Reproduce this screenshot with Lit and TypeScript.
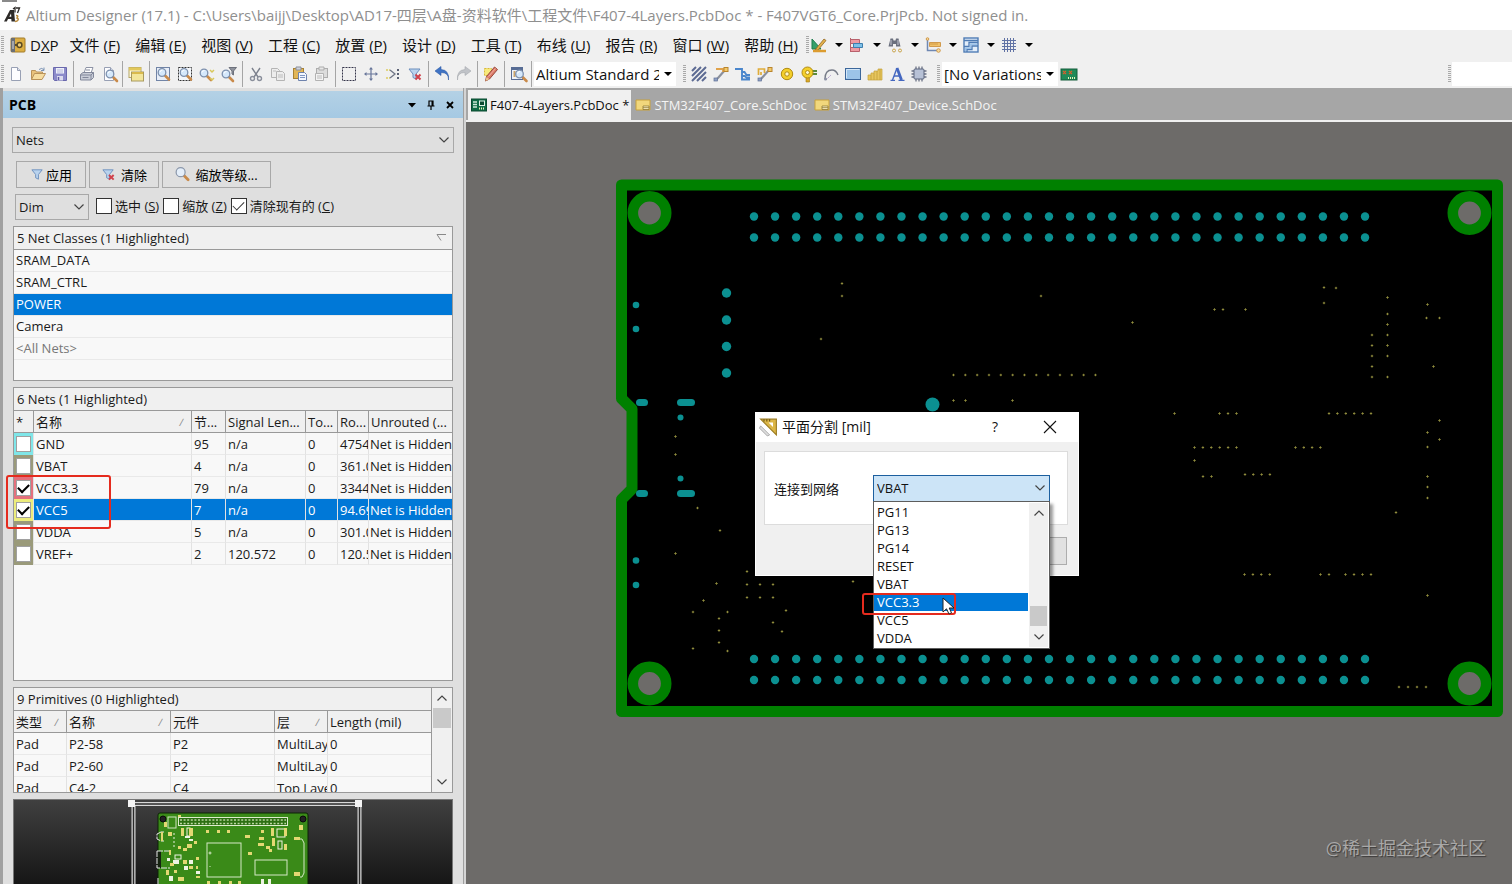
import { LitElement, html, svg, css, nothing } from "lit";
import { customElement } from "lit/decorators.js";
import { classMap } from "lit/directives/class-map.js";

/* ---------- shared icon fragments ---------- */
const lens = (x: number, y: number) => svg`
  <path d="M${x + 3} ${y + 3}l4 4" stroke="#c98a4a" stroke-width="2.6" stroke-linecap="round"/>
  <circle cx=${x} cy=${y} r="3.8" fill="#d5e8fb" stroke="#7d90ad" stroke-width="1.3"/>
  <path d="M${x - 2} ${y - 0.5}q.5-2 2.5-2" stroke="#fff" fill="none"/>`;
const funnel = svg`<path d="M2 3h11l-4 5v5l-3-1.500V8z" fill="#b9d3ee" stroke="#6d8fbd"/>`;
const redX = svg`<path d="M8.500 8.500l5 5m0-5l-5 5" stroke="#d0424c" stroke-width="2"/>`;
const sheet = svg`<path d="M3.500 1.500h6l3 3v10h-9z" fill="#fdfdff" stroke="#98a0b4"/><path d="M9.500 1.500v3h3" fill="#dfe4ef" stroke="#98a0b4"/>`;

const icons: Record<string, unknown> = {
  doc: sheet,
  open: svg`<path d="M1.500 13.500v-9h4l1 1.500h6v2" fill="#e9c27c" stroke="#b9925a"/><path d="M1.500 13.500l3-6h11l-3.500 6z" fill="#f6dca0" stroke="#b9925a"/><path d="M9 3.500q3-2.500 5 .5m0-2.500v3h-3" fill="none" stroke="#7b93b5"/>`,
  save: svg`<path d="M1.500 1.500h13v13h-12l-1-1z" fill="#8c8bca" stroke="#6a68ad"/><path d="M4 2h8v5.500H4z" fill="#eef0fa"/><path d="M5 4h6M5 6h6" stroke="#b4b6d8"/><path d="M5 10h6v4.500H5z" fill="#dcdcee"/><path d="M6.500 11v3" stroke="#5c5aa3" stroke-width="1.500"/>`,
  print: svg`<path d="M5 7l2-5.500h7L12 7" fill="#fff" stroke="#8d93a5"/><path d="M1.500 8.500l2.500-2h10.500v5l-2.500 2.500H1.500z" fill="#c9cdd8" stroke="#82889b"/><path d="M1.500 9h10.500v5M12 9l2.500-2.500M7 4h4M3.500 11.500h6" stroke="#82889b" fill="none"/>`,
  preview: svg`${sheet}${lens(9, 8)}`,
  window: svg`<rect x="1" y="1.500" width="12" height="10" fill="#fffbe0" stroke="#b5a564"/><path d="M1 3h12" stroke="#e2c85a" stroke-width="3"/><rect x="3.500" y="6" width="12" height="9" fill="#f3e69a" stroke="#a89a5e"/><path d="M4 7h11" stroke="#d9ba4c" stroke-width="2"/>`,
  zoomDoc: svg`<rect x="1.500" y="1.500" width="13" height="13" fill="#e8eef8" stroke="#7184a6"/>${lens(7, 6.5)}`,
  zoomArea: svg`<rect x="1.500" y="1.500" width="13" height="13" fill="#f4f7fb" stroke="#333" stroke-dasharray="2 1"/>${lens(7, 6.5)}`,
  zoomSel: svg`${lens(5, 7)}<path d="M11 4l2 2 2-2M11 12l2 2 2-2" stroke="#d8c75a" fill="none" stroke-width="1.500"/>`,
  zoomFilter: svg`${lens(5, 8)}<path d="M8 1.500h7.500l-3 3.500v4l-1.500-1V5z" fill="#8e929c" stroke="#6d717c"/>`,
  cut: svg`<path d="M4 2l6 9M12 2L6 11" stroke="#7c818d" stroke-width="1.400"/><circle cx="4.500" cy="12.500" r="2" fill="none" stroke="#8a8f9b" stroke-width="1.400"/><circle cx="11.500" cy="12.500" r="2" fill="none" stroke="#8a8f9b" stroke-width="1.400"/>`,
  copy: svg`<g fill="#ededed" stroke="#b4b4b4"><path d="M1.500 2.500h6l2 2v7h-8z"/><path d="M6.500 5.500h6l2 2v7h-8z"/></g><path d="M8 9h5M8 11h5M3 5h3" stroke="#bdbdbd"/>`,
  paste: svg`<rect x="1.500" y="2.500" width="10" height="10" fill="#e2b656" stroke="#a88234"/><path d="M4 1h5v3H4z" fill="#cfd3dc" stroke="#8b8f99"/><path d="M6.500 6.500h6l2 2v6h-8z" fill="#f3f7ff" stroke="#6e83ad"/><path d="M8 9.500h5M8 11.500h5" stroke="#7f96c2"/>`,
  pasteSp: svg`<rect x="2.500" y="2.500" width="11" height="9" fill="#dcdcdc" stroke="#adadad"/><path d="M5 1h5v3H5z" fill="#e7e7e7" stroke="#adadad"/><path d="M1.500 7.500h8v7h-8z" fill="#f3f3f3" stroke="#b2b2b2"/><path d="M3 10h5M3 12h5" stroke="#bbb"/>`,
  select: svg`<rect x="1.500" y="1.500" width="13" height="13" fill="none" stroke="#35354a" stroke-dasharray="2 1"/>`,
  move: svg`<path d="M8 2v12M2 8h12" stroke="#68769a" stroke-width="1.200"/><path d="M8 1l2 2.500H6zM8 15l-2-2.500h4zM1 8l2.500-2v4zM15 8l-2.500-2v4z" fill="#68769a"/>`,
  deselect: svg`<path d="M1 4h4M1 12h4" stroke="#dccb60" stroke-width="1.500" stroke-dasharray="2 1"/><path d="M5 4l5 4-5 4" fill="none" stroke="#707686" stroke-width="1.300"/><path d="M12 3h2v2h-2zM12 7h2v2h-2zM12 11h2v2h-2z" fill="#5a6174"/>`,
  clearFilter: svg`${funnel}${redX}`,
  funnel,
  lens: svg`<g transform="translate(0 -.5)"><path d="M9 9l5 5" stroke="#c98a4a" stroke-width="3" stroke-linecap="round"/><circle cx="6" cy="6" r="4.800" fill="#e4eef9" stroke="#8b97ab" stroke-width="1.300"/></g>`,
  undo: svg`<path d="M14.500 14Q15 6.500 7 6.500V9.500L1 5l6-4.500v3Q15.500 4 14.500 14z" fill="#3f73c4" stroke="#2f5da8" stroke-width=".6"/>`,
  redo: svg`<path d="M1.500 14Q1 6.500 9 6.500V9.500L15 5 9 .500v3Q.5 4 1.500 14z" fill="#c0c3c8" stroke="#a6a9ae" stroke-width=".6"/>`,
  pencil: svg`<path d="M1.500 2.500h7v7h-7z" fill="#f8ea7a" stroke="#d8b93a" stroke-dasharray="2 1"/><path d="M2.500 15l1-4.500L11.500 1l3 2.500L6.500 13z" fill="#dc7a68" stroke="#96483a"/><path d="M2.500 15l1-4 3 2.300z" fill="#eec28c"/><path d="M5.500 10.500l7-8" stroke="#f0b0a4"/>`,
  browse: svg`<rect x="1.500" y="1.500" width="11" height="12" fill="#eef3fa" stroke="#576c94"/><path d="M2 3h10" stroke="#576c94" stroke-width="2"/><path d="M3.500 6h2M3.500 8h2M3.500 10h2" stroke="#c08a3b" stroke-width="1.300"/>${lens(9.5, 8)}`,
  hatch: svg`<path d="M1 5l4-4M1 10l9-9M1 15L15 1M6 15l9-9M11 15l4-4" stroke="#5d6b93" stroke-width="2"/>`,
  route: svg`<path d="M2.500 14L5 12l7-8" stroke="#8b909c" stroke-width="2.200" fill="none"/><path d="M3 3h7v3" stroke="#e0a24a" stroke-width="1.800" fill="none"/><rect x="11" y="1.500" width="4" height="4" fill="#f2c96a" stroke="#b9842c"/><rect x="1" y="12" width="3.500" height="3" fill="#8fa0c4" stroke="#5f7096" stroke-width=".7"/>`,
  multi: svg`<path d="M0 3h7v10.500h8M7 6h2.500l2 3H15M7 10h2.500l2 1.500H15" stroke="#4a86cc" stroke-width="1.900" fill="none"/>`,
  diff: svg`<path d="M3 14L12 4" stroke="#8b909c" stroke-width="2.200"/><path d="M1.500 9V3h6v4M4 9V6" stroke="#dfac3a" stroke-width="1.700" fill="none"/><rect x="11" y="1.500" width="4" height="4" fill="#f2c96a" stroke="#b9842c"/><rect x="1" y="12" width="3.500" height="3" fill="#8fa0c4" stroke="#5f7096" stroke-width=".7"/>`,
  pad: svg`<circle cx="8" cy="8" r="5.700" fill="#f4cf2a" stroke="#b08b12"/><circle cx="8" cy="8" r="2.200" fill="#fff7cf" stroke="#b08b12"/>`,
  via: svg`<path d="M5 10h3.500v6H5z" fill="#dba927" stroke="#a37d16" stroke-width=".6"/><path d="M11 5h5M11 8h5" stroke="#5b8a3b" stroke-width="1.800"/><circle cx="6.500" cy="6.500" r="5.500" fill="#f4cf2a" stroke="#b08b12"/><circle cx="6.500" cy="6.500" r="2" fill="#fff7cf" stroke="#b08b12"/>`,
  arc: svg`<path d="M2 13Q2 4 9 4q4 0 6 5" stroke="#777c88" stroke-width="1.400" fill="none"/><path d="M3 14l5-5" stroke="#b09bc9" stroke-dasharray="2 1"/><circle cx="2.500" cy="13" r="1.500" fill="#8b90a3"/>`,
  fill: svg`<rect x=".5" y="2.500" width="15" height="11" fill="#9cc4e8" stroke="#3c679b"/><path d="M1.500 12V3.500h13" stroke="#d4e7f8" fill="none"/>`,
  poly: svg`<path d="M1 14V9h3V7h3V5h4V3h4v11z" fill="#e7c65d" stroke="#c4a03b" stroke-width=".7"/><path d="M4 9v5M7 7v7M10 5v9M13 3v11" stroke="#c4a03b" stroke-width=".8"/>`,
  textA: svg`<path d="M8 2L3.500 14" stroke="#4467c0" stroke-width="1.400" fill="none"/><path d="M8 2l4.500 12" stroke="#4467c0" stroke-width="2.800" fill="none"/><path d="M5 10h6M1.500 14.300h4.500M9.500 14.300h6" stroke="#4467c0" stroke-width="1.300"/>`,
  chip: svg`<path d="M5 .5v15M8 .5v15M11 .5v15M.5 5h15M.5 8h15M.5 11h15" stroke="#6b7286" stroke-width="1.300"/><rect x="3" y="3" width="10" height="10" rx="1" fill="#b7c1d6" stroke="#5d667e"/>`,
  board: svg`<rect x="0" y="3" width="16" height="11" fill="#1f8a58" stroke="#155c3b"/><path d="M2 5l3 3M5 5L2 8M8 5l3 3M11 5L8 8" stroke="#d3602e" stroke-width="1.300"/><path d="M7 12h8" stroke="#e5f3b7" stroke-width="2" stroke-dasharray="1 1"/>`,
  ruler: svg`<path d="M1 2v10h9z" fill="#35a06b" stroke="#1c7c4d"/><path d="M4 13l9-11 2 1.500L7 13z" fill="#e3b14c" stroke="#93671e" stroke-width=".8"/><path d="M2 14h13" stroke="#dc9c30" stroke-width="2.500"/>`,
  align: svg`<path d="M1.500 2.500h9v4h-9zM1.500 10.500h9v4h-9z" fill="#ef9aa2" stroke="#b8616c"/><path d="M4.500 6.500h9v4h-9z" fill="#7ec0e8" stroke="#3e7fae"/><path d="M1.500 1v14" stroke="#b8616c"/>`,
  binocs: svg`<path d="M1.500 9.500l2-8H6l.5 2h2l.5-2h2.500l2 8H9V7H6v2.500z" fill="#6a6f7d"/><path d="M4 3v5M11 3v5" stroke="#c4c8d3"/><circle cx="7" cy="13.500" r="1.500" fill="none" stroke="#c9a34a"/><circle cx="13" cy="13.500" r="1.500" fill="none" stroke="#c9a34a"/>`,
  dims: svg`<path d="M2.500 2v11.500H14" stroke="#6f88b2" stroke-width="1.500" fill="none"/><path d="M4.500 5.500h11v4h-11z" fill="#f0c26a" stroke="#c98a34" stroke-width=".8"/><path d="M6 6v2M8 6v2M10 6v2M12 6v2" stroke="#c98a34" stroke-width=".7"/><circle cx="2.500" cy="2" r="1.300" fill="#f6dca0" stroke="#c98a34" stroke-width=".8"/><circle cx="13.500" cy="13.500" r="1.800" fill="#f6dca0" stroke="#c98a34" stroke-width=".8"/>`,
  rooms: svg`<rect x="1" y="1" width="14" height="14" fill="#e3eefa" stroke="#4f7cb5" stroke-width="1.400"/><path d="M1 9.500h5v-4h9M4 15v-2.500h5V9h6M1 3.500h14" stroke="#4f7cb5" stroke-width="1.300" fill="none"/><path d="M2 10.500h5v-4h7V8H8v4H3v2H2z" fill="#9cc3ea"/>`,
  grid: svg`<path d="M3.500 1v14M6.500 1v14M9.500 1v14M12.500 1v14M1 3.500h14M1 6.500h14M1 9.500h14M1 12.500h14" stroke="#6173a5"/>`,
  dxp: svg`<rect x="1" y="1" width="14" height="14" rx="1" fill="#dcae42" stroke="#a37d2a"/><path d="M1 1h4v14H1z" fill="#6b6f76"/><path d="M3 4v8" stroke="#ddd"/><circle cx="9.500" cy="8" r="2.400" fill="#f0cf7a" stroke="#5a4a23" stroke-width="1.500"/><path d="M5 8h2.500" stroke="#5a4a23" stroke-width="2"/>`,
  logo: svg`<path d="M0 14.500L6 3h4l1 11.500H7.500l-.2-2.500H4l-1.200 2.500z" fill="#2d2a28"/><path d="M5.300 9.700h2L7 6.500z" fill="#fff"/><path d="M9 2l2-1.500v5M12 1h3.500l-2 5" stroke="#2d2a28" stroke-width="1.300" fill="none"/><path d="M12 8.500q3 0 1 2.500 2.500 1 0 3l-2 .5" stroke="#b98b3d" stroke-width="1.500" fill="none"/>`,
  pcbTab: svg`<rect x=".5" y="2" width="15" height="12" fill="#0f6b45" stroke="#0a4a30"/><path d="M2 5h4M2 7.500h4M2 10h4" stroke="#cfe9d8" stroke-width="1.300"/><rect x="8.500" y="4" width="5" height="4.500" fill="#0a4a30" stroke="#dff0e6"/><path d="M8 11.500h6" stroke="#e8f3b5" stroke-width="2" stroke-dasharray="1 1"/>`,
  schTab: svg`<path d="M1 3h14v10H1z" fill="#f1d77c" stroke="#c7a13c"/><path d="M8 9h6v3.500H8z" fill="#fdf3c6" stroke="#8e762f" stroke-width=".8"/><path d="M8 10.700h6" stroke="#8e762f" stroke-width=".8"/>`,
  square: svg`<path d="M1 1h14v14z" fill="#dcb646" stroke="#9b7c22"/><path d="M8 4h4v4z" fill="#fff"/><path d="M4 1v2M6.500 1v2M9 1v2" stroke="#6b5515"/><path d="M1 7l8 8-2 1-7-7z" fill="#dedede" stroke="#9a9a9a" stroke-width=".7"/>`,
};
const icon = (name: string) =>
  html`<svg class="ico" viewBox="0 0 16 16" aria-hidden="true">${icons[name]}</svg>`;
const chevron = (cls = "") =>
  html`<svg class="chev ${cls}" viewBox="0 0 10 6" aria-hidden="true"><path d="M.5 .5L5 5 9.500 .5" fill="none" stroke="currentColor" stroke-width="1.200"/></svg>`;
const arrow = html`<svg class="arrow" viewBox="0 0 8 4" aria-hidden="true"><path d="M0 0h8L4 4z" fill="#000"/></svg>`;

const base = css`
  :host, * { box-sizing: border-box; }
  button, select, input { font: inherit; color: inherit; margin: 0; }
  select { appearance: none; border-radius: 0; outline: none; }
  .ico { width: 16px; height: 16px; display: block; flex: none; overflow: visible; }
  .chev { width: 10px; height: 6px; display: block; flex: none; color: #444; }
  .up { transform: rotate(180deg); }
  .arrow { width: 8px; height: 4px; flex: none; }
  .combo { display: grid; align-items: center; }
  .combo > select { grid-area: 1 / 1; width: 100%; height: 100%; min-width: 0; }
  .combo > svg { grid-area: 1 / 1; justify-self: end; pointer-events: none; }
`;

/* ---------- title, menu and tool bars ---------- */
@customElement("app-bars")
class AppBars extends LitElement {
  static styles = [base, css`
    :host { display: block; background: #f0f0f0; font-size: 15px; color: #111; }
    .title { display: flex; align-items: center; gap: 6px; height: 30px; padding: 3px 4px; background: #fff; color: #8f8f8f; white-space: nowrap; overflow: hidden; line-height: 24px; }
    .row { display: flex; align-items: center; height: 29px; }
    .grip { width: 3px; height: 18px; margin: 0 1px; flex: none; background: repeating-linear-gradient(#a9a9a9 0 1px, transparent 1px 2px); }
    .wide { margin: 0 2px 0 7px; }
    .menus { display: flex; align-items: center; gap: 15px; padding-left: 5px; }
    .menu { display: flex; align-items: center; border: 0; background: none; padding: 0; white-space: nowrap; line-height: 20px; }
    .menu .ico { margin-right: 4px; }
    .menus .menu:first-child { margin-right: -4px; }
    .menus + .grip { margin-left: 8px; }
    .drops { display: flex; }
    .drop { width: 38px; height: 22px; display: flex; align-items: center; justify-content: space-between; border: 0; background: none; padding: 0 6px 0 0; }
    .tool { width: 22px; height: 24px; padding: 0; border: 0; background: none; display: grid; place-items: center; flex: none; }
    .sep { width: 1px; height: 26px; margin: 0 2px; background: #a5a5a5; flex: none; }
    .combo { height: 24px; background: #fff; flex: none; }
    .combo select { border: 0; background: none; padding: 0 17px 0 2px; white-space: nowrap; }
    .std { width: 142px; }
    .var { width: 116px; }
    .combo .arrow { margin-right: 4px; }
    .spring { flex: 1; }
    .field { width: 60px; height: 24px; border: 0; background: #fff; padding: 0 4px; }
  `];
  private menus = [["文件", "F"], ["编辑", "E"], ["视图", "V"], ["工程", "C"], ["放置", "P"], ["设计", "D"], ["工具", "T"], ["布线", "U"], ["报告", "R"], ["窗口", "W"], ["帮助", "H"]];
  private drops = ["ruler", "align", "binocs", "dims", "rooms", "grid"];
  private main = [["doc", "open", "save"], ["print", "preview"], ["window"], ["zoomDoc", "zoomArea", "zoomSel", "zoomFilter"], ["cut", "copy", "paste", "pasteSp"], ["select", "move", "deselect", "clearFilter"], ["undo", "redo"], ["pencil"], ["browse"]];
  private place = ["hatch", "route", "multi", "diff", "pad", "via", "arc", "fill", "poly", "textA", "chip"];
  private tool(n: string) {
    return html`<button class="tool" aria-label=${n}>${icon(n)}</button>`;
  }
  render() {
    return html`
      <header class="title">${icon("logo")}<span>Altium Designer (17.1) - C:\\Users\\baijj\\Desktop\\AD17-四层\\A盘-资料软件\\工程文件\\F407-4Layers.PcbDoc * - F407VGT6_Core.PrjPcb. Not signed in.</span></header>
      <div class="row">
        <span class="grip"></span>
        <nav class="menus">
          <button class="menu">${icon("dxp")}D<u>X</u>P</button>
          ${this.menus.map(([t, k]) => html`<button class="menu">${t}&nbsp;(<u>${k}</u>)</button>`)}
        </nav>
        <span class="grip wide"></span>
        <div class="drops">${this.drops.map((d) => html`<button class="drop" aria-label=${d}>${icon(d)}${arrow}</button>`)}</div>
      </div>
      <div class="row">
        <span class="grip"></span>
        ${this.main.map((g) => html`${g.map((n) => this.tool(n))}<span class="sep"></span>`)}
        <div class="combo std"><select aria-label="View configuration"><option>Altium Standard 2D</option></select>${arrow}</div>
        <span class="grip wide"></span>
        ${this.place.map((n) => this.tool(n))}
        <span class="grip wide"></span>
        <div class="combo var"><select aria-label="Variations"><option>[No Variations]</option></select>${arrow}</div>
        ${this.tool("board")}
        <span class="spring"></span>
        <span class="grip"></span>
        <input class="field" aria-label="Address">
      </div>`;
  }
}

/* ---------- thumbnail of the board ---------- */
const thumbParts: [number, number, number, number, string][] = [
  [22, 15, 3, 2, "y"], [8, 22, 3, 5, "y"], [25, 28, 3, 8, "y"], [33, 28, 4, 8, "y"], [29, 36, 5, 2, "w"],
  [12, 32, 4, 4, "y"], [22, 46, 3, 3, "y"], [27, 48, 4, 3, "y"], [33, 39, 4, 2, "w"], [31, 44, 5, 4, "y"],
  [38, 41, 3, 3, "y"], [50, 30, 3, 3, "y"], [61, 30, 3, 3, "y"], [71, 30, 3, 3, "y"], [89, 35, 5, 3, "y"],
  [92, 52, 4, 3, "y"], [103, 37, 5, 3, "y"], [105, 30, 3, 3, "y"], [102, 43, 6, 3, "y"], [116, 38, 3, 8, "y"],
  [115, 28, 3, 8, "y"], [128, 28, 3, 8, "y"], [128, 44, 3, 6, "y"], [143, 25, 4, 5, "y"], [138, 37, 6, 3, "y"],
  [138, 72, 6, 4, "y"], [110, 46, 4, 3, "y"], [113, 49, 3, 3, "y"], [5, 32, 2, 9, "y"], [13, 50, 2, 5, "y"],
  [17, 60, 6, 4, "w"], [14, 63, 4, 3, "y"], [27, 60, 4, 4, "y"], [33, 60, 4, 4, "w"], [28, 66, 4, 4, "w"],
  [33, 66, 4, 3, "y"], [40, 66, 2, 3, "y"], [40, 71, 4, 3, "w"], [40, 76, 4, 2, "y"], [22, 77, 6, 4, "y"],
  [13, 76, 4, 5, "w"], [40, 57, 3, 3, "y"], [18, 70, 3, 3, "y"], [10, 70, 3, 5, "y"], [11, 58, 3, 3, "w"],
  [51, 81, 3, 3, "y"], [62, 81, 3, 3, "y"], [73, 81, 3, 3, "y"], [82, 81, 3, 3, "y"], [105, 79, 3, 5, "w"], [112, 79, 3, 5, "w"],
];

/* ---------- PCB side panel ---------- */
type NetRow = { c: string; on?: boolean; sel?: boolean; v: string[] };
@customElement("pcb-panel")
class PcbPanel extends LitElement {
  static styles = [base, css`
    :host { display: flex; flex-direction: column; background: #dfdfdf; border-left: 3px solid #a0a0a0; border-right: 1px solid #a0a0a0; font-size: 13px; color: #1a1a1a; min-height: 0; overflow: hidden; }
    .head { display: flex; align-items: center; height: 27px; flex: none; margin-top: 3px; padding: 0 4px 0 6px; background: linear-gradient(#b4d1e5, #a5c9e3); color: #000; }
    .head h2 { flex: 1; margin: 0; font-size: 14px; line-height: 20px; }
    .hb { width: 19px; height: 20px; padding: 0; border: 0; background: none; display: grid; place-items: center; }
    .hb svg { width: 10px; height: 10px; }
    .body { display: flex; flex-direction: column; flex: 1; min-height: 0; padding: 9px 9px 0 9px; }
    .body .combo select { border: 1px solid #a8a8a8; background: #dfdfdf; padding: 0 20px 0 3px; }
    .nets { height: 26px; flex: none; }
    .combo .chev { margin-right: 5px; }
    .btns { display: flex; gap: 3px; height: 27px; margin: 8px 0 6px 4px; flex: none; }
    .btn { display: flex; align-items: center; justify-content: center; gap: 5px; width: 70px; border: 1px solid #a8a8a8; background: #dfdfdf; padding: 0; white-space: nowrap; color: #000; }
    .btn:first-child { gap: 1px; }
    .btn .ico { width: 15px; height: 15px; }
    .zoom { width: 109px; }
    .opts { display: flex; align-items: center; height: 26px; margin: 0 0 6px 3px; flex: none; white-space: nowrap; }
    .dim { width: 74px; height: 26px; margin-right: 7px; }
    .opt { display: flex; align-items: center; gap: 3px; margin-right: 4px; height: 26px; line-height: 20px; padding-bottom: 3px; }
    input[type="checkbox"] { appearance: none; width: 16px; height: 16px; border: 1px solid #333; background: #fff; display: grid; place-items: center; flex: none; }
    input[type="checkbox"]:checked::after { content: ""; width: 10px; height: 5px; border: solid #333; border-width: 0 0 1px 1px; transform: rotate(-45deg) translate(1px, -1px); }
    .list { border: 1px solid #999; background: #f8f8f8; flex: none; overflow: hidden; margin: 0 1px 6px; line-height: 20px; }
    .classes { height: 155px; }
    .netlist { height: 294px; }
    .prims { height: 106px; display: flex; }
    .cap { display: flex; align-items: center; justify-content: space-between; height: 23px; padding: 0 6px 0 3px; background: #f0f0f0; border-bottom: 1px solid #999; }
    .cap svg { width: 10px; height: 8px; }
    ul { list-style: none; margin: 0; padding: 0; }
    li { height: 22px; padding: 0 2px; border-bottom: 1px solid #e9e9e9; }
    .dimmed { color: #777; }
    .sel, tr.sel td { background: #0078d7; color: #fff; }
    table { border-collapse: separate; border-spacing: 0; table-layout: fixed; width: 100%; }
    th { height: 22px; padding: 0 0 0 2px; text-align: left; font-weight: 400; background: #f0f0f0; border-bottom: 1px solid #999; border-left: 1px solid #999; white-space: nowrap; overflow: hidden; }
    th:first-child, td:first-child { border-left: 0; padding-left: 2px; }
    td { height: 22px; padding: 0 0 0 2px; white-space: nowrap; overflow: hidden; border-bottom: 1px solid #e9e9e9; border-left: 1px solid #e2e2e2; }
    .netlist td:last-child { padding-left: 1px; }
    .th { display: flex; justify-content: space-between; align-items: center; padding-right: 8px; }
    .th i { color: #888; font-size: 10px; }
    .netlist td:first-child { padding: 0; border: 0; }
    .chk { display: grid; width: 19px; height: 22px; place-items: center; }
    .netlist .chk input { width: 15px; height: 16px; border: 1px solid #a0a0a0; }
    .netlist .chk input:checked::after { border-color: #000; border-width: 0 0 2px 2px; width: 9px; height: 5px; transform: rotate(-45deg) translate(1px, -1px); }
    .cyan { background: #7fe6e9; } .olive { background: #9a9a7a; } .rose { background: #e4707c; } .lemon { background: #ecec7c; }
    .grow { flex: 1; min-width: 0; border-right: 1px solid #999; }
    .bar { width: 20px; display: flex; flex-direction: column; align-items: center; background: #f0f0f0; padding: 7px 0; }
    .bar .thumb { width: 18px; height: 20px; background: #c9c9c9; margin: 7px 0 auto; }
    .thumbwrap { flex: 1; min-height: 80px; margin: 0 1px; border: 1px solid #777; border-bottom: 0; background: linear-gradient(#404040, #161616); overflow: hidden; }
    .thumbwrap svg { display: block; width: 100%; height: 85px; }
  `];
  private rows: NetRow[] = [
    { c: "cyan", v: ["GND", "95", "n/a", "0", "47547.2", "Net is Hidden"] },
    { c: "olive", v: ["VBAT", "4", "n/a", "0", "361.01", "Net is Hidden"] },
    { c: "rose", on: true, v: ["VCC3.3", "79", "n/a", "0", "33442.1", "Net is Hidden"] },
    { c: "lemon", on: true, sel: true, v: ["VCC5", "7", "n/a", "0", "94.695", "Net is Hidden"] },
    { c: "olive", v: ["VDDA", "5", "n/a", "0", "301.06", "Net is Hidden"] },
    { c: "olive", v: ["VREF+", "2", "120.572", "0", "120.572", "Net is Hidden"] },
  ];
  private prims = [["Pad", "P2-58", "P2", "MultiLayer", "0"], ["Pad", "P2-60", "P2", "MultiLayer", "0"], ["Pad", "C4-2", "C4", "Top Layer", "0"]];
  private heads = (labels: string[], sorted: number[]) =>
    html`<tr>${labels.map((l, i) => html`<th><span class="th">${l}${sorted.includes(i) ? html`<i>∕</i>` : nothing}</span></th>`)}</tr>`;
  render() {
    return html`
      <div class="head"><h2>PCB</h2>
        <button class="hb" aria-label="Menu"><svg viewBox="0 0 10 10"><path d="M1 3h8L5 7.500z"/></svg></button>
        <button class="hb" aria-label="Pin"><svg viewBox="0 0 10 10"><path d="M3 1h4v5H3zM1.500 6h7M5 6v4" fill="none" stroke="#000" stroke-width="1.200"/><path d="M5.500 1H7v5H5.500z"/></svg></button>
        <button class="hb" aria-label="Close"><svg viewBox="0 0 10 10"><path d="M2 2l6 6m0-6l-6 6" stroke="#000" stroke-width="1.800"/></svg></button>
      </div>
      <div class="body">
        <div class="combo nets"><select aria-label="Mode"><option>Nets</option></select>${chevron()}</div>
        <div class="btns">
          <button class="btn">${icon("funnel")}应用</button>
          <button class="btn">${icon("clearFilter")}清除</button>
          <button class="btn zoom">${icon("lens")}缩放等级...</button>
        </div>
        <div class="opts">
          <div class="combo dim"><select aria-label="Highlight"><option>Dim</option></select>${chevron()}</div>
          <label class="opt"><input type="checkbox"><span>选中 (<u>S</u>)</span></label>
          <label class="opt"><input type="checkbox"><span>缩放 (<u>Z</u>)</span></label>
          <label class="opt"><input type="checkbox" checked><span>清除现有的 (<u>C</u>)</span></label>
        </div>
        <section class="list classes">
          <div class="cap">5 Net Classes (1 Highlighted)<svg viewBox="0 0 10 8"><path d="M1 .5h9M1 .5l4 6" stroke="#888" fill="none"/></svg></div>
          <ul>
            <li>SRAM_DATA</li><li>SRAM_CTRL</li><li class="sel">POWER</li><li>Camera</li><li class="dimmed">&lt;All Nets&gt;</li>
          </ul>
        </section>
        <section class="list netlist">
          <div class="cap">6 Nets (1 Highlighted)</div>
          <table>
            <colgroup><col width="19"><col><col width="34"><col width="80"><col width="32"><col width="31"><col width="84"></colgroup>
            <thead>${this.heads(["*", "名称", "节...", "Signal Len...", "To...", "Ro...", "Unrouted (..."], [1])}</thead>
            <tbody>${this.rows.map((r) => html`<tr class=${classMap({ sel: !!r.sel })}>
              <td><span class="chk ${r.c}"><input type="checkbox" aria-label=${r.v[0]} ?checked=${!!r.on}></span></td>
              ${r.v.map((x) => html`<td>${x}</td>`)}</tr>`)}</tbody>
          </table>
        </section>
        <section class="list prims">
          <div class="grow">
            <div class="cap">9 Primitives (0 Highlighted)</div>
            <table>
              <colgroup><col width="52"><col width="104"><col width="104"><col width="53"><col></colgroup>
              <thead>${this.heads(["类型", "名称", "元件", "层", "Length (mil)"], [0, 1, 3])}</thead>
              <tbody>${this.prims.map((r) => html`<tr>${r.map((x) => html`<td>${x}</td>`)}</tr>`)}</tbody>
            </table>
          </div>
          <div class="bar">${chevron("up")}<span class="thumb"></span>${chevron()}</div>
        </section>
        <div class="thumbwrap">${this.thumb()}</div>
      </div>`;
  }
  private thumb() {
    return html`<svg viewBox="0 0 438 85" preserveAspectRatio="xMidYMin slice" aria-hidden="true">
      <rect x="119.500" y="4" width="226" height="120" fill="none" stroke="#d8d8d8" stroke-width="4"/>
      <rect x="119.500" y="4" width="226" height="120" fill="none" stroke="#2a2a2a" stroke-width="1.500"/>
      <path d="M114 0h7v7h-7zM341 0h7v7h-7z" fill="#f4f4f4"/>
      <g transform="translate(144 0)">
        <rect x="0" y="13" width="150" height="80" rx="2" fill="#3a8a18" stroke="#0d2206"/>
        <circle cx="5" cy="19" r="3" fill="#222" stroke="#0a0a0a"/><circle cx="145" cy="19" r="3" fill="#222" stroke="#0a0a0a"/>
        <rect x="20.500" y="17.500" width="109" height="8" fill="#2c6f12" stroke="#dfeccf"/>
        <path d="M22 20h106M22 23.500h106" stroke="#bcd8a2" stroke-width="1.600" stroke-dasharray="2 1.600"/>
        <rect x="49" y="43" width="34" height="34" fill="none" stroke="#d5e8c6"/>
        <path d="M50.500 53h3M52 51.500v3M52 66v1" stroke="#d5e8c6"/>
        <rect x="97" y="60" width="32" height="15" fill="none" stroke="#d5e8c6"/>
        <rect x="119" y="29" width="8" height="8" fill="none" stroke="#f2f2e0"/><rect x="120" y="41" width="4" height="8" fill="none" stroke="#f2f2e0"/>
        <rect x="10" y="17" width="8" height="11" fill="none" stroke="#cfe3bf"/><rect x="29" y="28" width="3" height="8" fill="none" stroke="#f2f2e0"/>
        <path d="M142 39h2l2 4v30l-2 4h-2" fill="none" stroke="#d5e8c6"/>
        <path d="M16 33v14" stroke="#e6efdc" stroke-dasharray="2 2"/>
        <path d="M-1 51h4v17h-4z" fill="#152110"/>
        <path d="M3 32h3M3 32l-4 2v5l4 2h3M-1 51h13M-1 51v17h13M0 78v12" fill="none" stroke="#e8e8e8" stroke-dasharray="6 1"/>
        <rect x="17" y="55" width="6" height="4" fill="none" stroke="#eef3e4"/>
        ${thumbParts.map(([x, y, w, h, c]) => svg`<rect x=${x - 2} y=${y} width=${w} height=${h} fill=${c === "y" ? "#e3d873" : "#eef3e4"}/>`)}
      </g></svg>`;
  }
}

/* ---------- board drawing ---------- */
const vias: [number, number][] = [
  [842, 283.5], [842, 296], [1041, 296], [821, 339], [953.5, 400.5], [965.5, 400.5], [1012.5, 400.5],
  [1324, 287.5], [1336, 288], [1324, 303], [1214.5, 309.5], [1223, 309.5], [1245.5, 309.5], [1132.5, 322.5],
  [1387.5, 297.5], [1387.5, 314], [1387.5, 324.5], [1387.5, 335], [1387.5, 345.5], [1387.5, 356], [1387.5, 377],
  [1372, 335], [1372, 345.5], [1372, 356], [1372, 366.5], [1372, 377], [1427.5, 304.5], [1426.5, 318], [1439.5, 318],
  [1433.5, 366.5], [1174.5, 413.5], [1219.5, 413.5], [1228, 413.5], [1236.5, 413.5], [1439.5, 420.5], [1427.5, 432.5],
  [1439.5, 439.5], [1427.5, 447], [1194.5, 460.5], [1203, 476.5], [1211.5, 476.5], [1427.5, 476.5], [1427.5, 487],
  [1427.5, 498], [1396, 512.5], [1320.5, 574.5], [1329, 574.5], [1427.5, 595.5], [675.5, 436.5], [675.5, 454.5],
  [697.5, 508], [720, 530.5], [675.5, 553.5], [747, 571.5], [716.5, 583.5], [747, 584.5], [760, 584.5], [773, 584.5],
  [853, 581.5], [703.5, 600.5], [747, 597.5], [760, 597.5], [773, 597.5], [693, 612], [727.5, 612], [719, 618.5],
  [786, 610.5], [773, 622.5], [719, 630.5], [782, 631.5], [719, 642.5], [693, 648.5], [727.5, 651],
];
const runs: [number, number, number, number][] = [
  [953.5, 375, 13, 11.83], [1329, 413.5, 6, 8.4], [1194.5, 447.5, 6, 8.4], [1295.5, 447.5, 4, 8.3],
  [1245, 474.5, 4, 8.3], [1244.5, 574.5, 4, 8.4], [1345.5, 574.5, 4, 8.5], [1399, 687, 4, 9],
];
for (const [x, y, n, step] of runs) for (let i = 0; i < n; i++) vias.push([x + i * step, y]);
const header = Array.from({ length: 30 }, (_, i) => 754 + i * 21.07);

/* ---------- document area ---------- */
@customElement("doc-area")
class DocArea extends LitElement {
  static styles = [base, css`
    :host { display: flex; flex-direction: column; min-width: 0; font-size: 13px; }
    .tabs { display: flex; height: 34px; padding: 2px 0 0 2px; background: #a6a6a6; border-bottom: 2px solid #f0f0f0; flex: none; }
    .tab { display: flex; align-items: center; gap: 3px; border: 0; background: none; color: #f4f4f4; padding: 0 3px 0 4px; white-space: nowrap; }
    .tab.on { background: #f0f0f0; color: #111; padding: 0 2px 0 3px; }
    .canvas { position: relative; flex: 1; min-height: 0; background: #6d6b69; overflow: hidden; }
    .pcb { display: block; width: 100%; }
    .mark { position: absolute; right: 26px; bottom: 22px; font-size: 18px; line-height: 28px; color: #a9a8a7; text-shadow: 1px 1px 1px #3c3b3a; }
    .dlg { position: absolute; left: 289px; top: 290px; width: 324px; background: #f0f0f0; border: 1px solid #fff; color: #111; }
    .bar { display: flex; align-items: center; height: 29px; padding: 0 13px 2px 3px; background: #fff; font-size: 14px; line-height: 20px; }
    .bar .ico { width: 19px; height: 18px; margin-right: 4px; }
    .bar h3 { flex: 1; margin: 0; font-size: 14px; font-weight: 400; }
    .wb { width: 30px; height: 26px; border: 0; background: none; padding: 0; margin-left: 25px; display: grid; place-items: center; }
    .wb svg { width: 14px; height: 14px; }
    .box { display: flex; align-items: center; justify-content: space-between; height: 74px; margin: 9px 10px 0 8px; padding: 0 17px 0 9px; background: #fff; border: 1px solid #dcdcdc; }
    .pick { position: relative; width: 177px; }
    .pick .combo { height: 27px; }
    .pick select { border: 1px solid #1c5f9f; background: #cce4f7; padding: 0 20px 0 3px; }
    .pick .combo .chev { margin-right: 5px; }
    .drop { position: absolute; z-index: 2; left: 0; top: 26px; width: 177px; display: flex; background: #fff; border: 1px solid #5d5d5d; box-shadow: 3px 3px 3px #0006; padding: 1px 1px 1px 0; }
    ul { list-style: none; margin: 0; padding: 0; flex: 1; }
    li { height: 18px; line-height: 18px; padding-left: 3px; margin-right: 1px; }
    li.hot { background: #0078d7; color: #fff; }
    .scroll { width: 19px; display: flex; flex-direction: column; align-items: center; background: #f0f0f0; padding: 7px 0; }
    .scroll span { width: 17px; height: 20px; background: #c9c9c9; margin: auto 0 8px; }
    .foot { display: flex; justify-content: flex-end; padding: 12px 11px 10px; }
    .foot button { width: 88px; height: 28px; border: 1px solid #adadad; background: #e1e1e1; }
    .ring { position: absolute; z-index: 3; left: -11px; top: 118px; width: 94px; height: 22px; border: 2px solid #e52b1e; border-radius: 3px; }
    .cursor { position: absolute; z-index: 4; left: 69px; top: 122px; width: 13px; height: 19px; }
  `];
  render() {
    const teal = "#0b9091";
    return html`
      <div class="tabs" role="tablist">
        <button class="tab on" role="tab">${icon("pcbTab")}F407-4Layers.PcbDoc *</button>
        <button class="tab" role="tab">${icon("schTab")}STM32F407_Core.SchDoc</button>
        <button class="tab" role="tab">${icon("schTab")}STM32F407_Device.SchDoc</button>
      </div>
      <div class="canvas">
        <svg class="pcb" viewBox="466 122 1046 762" aria-label="PCB">
          <path d="M621.500 185H1497.500V711.500H621.500V499.500L632 489V409L621.500 398.500z" fill="#000" stroke="#008000" stroke-width="11" stroke-linejoin="round"/>
          ${[[649.5, 213], [1469.5, 213], [649.5, 683.5], [1469.5, 683.5]].map(([x, y]) => svg`<circle cx=${x} cy=${y} r="16.700" fill="#6d6b69" stroke="#008000" stroke-width="10.600"/>`)}
          <g fill=${teal}>
            ${[216.5, 237.5, 659, 680].map((y) => header.map((x) => svg`<circle cx=${x} cy=${y} r="4.200"/>`))}
            ${[293, 320, 346.5, 373].map((y) => svg`<circle cx="726.500" cy=${y} r="4.700"/>`)}
            ${[305, 329, 560.5, 585].map((y) => svg`<circle cx="636" cy=${y} r="3.300"/>`)}
            ${[402.5, 493.5].map((y) => svg`<rect x="636" y=${y - 3.5} width="12" height="7" rx="3.500"/><rect x="677" y=${y - 3.5} width="18" height="7" rx="3.500"/>`)}
            <circle cx="680.500" cy="417.500" r="3"/><circle cx="680.500" cy="478.500" r="3"/><circle cx="932.500" cy="404.500" r="7"/>
          </g>
          <path d=${vias.map(([x, y]) => `M${x - 1.2} ${y}h2.4M${x} ${y - 1.2}v2.4`).join("")} stroke="#8f8b3c" stroke-width="1"/>
        </svg>
        <div class="mark">@稀土掘金技术社区</div>
        <div class="dlg" role="dialog" aria-label="平面分割">
          <div class="bar">${icon("square")}<h3>平面分割 [mil]</h3>
            <button class="wb">?</button>
            <button class="wb" aria-label="Close"><svg viewBox="0 0 14 14"><path d="M1 1l12 12M13 1L1 13" stroke="#111" stroke-width="1.100"/></svg></button>
          </div>
          <div class="box">
            <label for="net">连接到网络</label>
            <div class="pick">
              <div class="combo"><select id="net"><option>VBAT</option></select>${chevron()}</div>
              <div class="drop">
                <ul role="listbox">${["PG11", "PG13", "PG14", "RESET", "VBAT", "VCC3.3", "VCC5", "VDDA"].map((n) => html`<li role="option" class=${classMap({ hot: n === "VCC3.3" })}>${n}</li>`)}</ul>
                <div class="scroll">${chevron("up")}<span></span>${chevron()}</div>
              </div>
              <div class="ring"></div>
              <svg class="cursor" viewBox="0 0 13 19"><path d="M1 1v14l3.500-3.200L7 17l2.500-1.200L7.200 11H12z" fill="#fff" stroke="#222"/></svg>
            </div>
          </div>
          <div class="foot"><button aria-label="取消"></button></div>
        </div>
      </div>`;
  }
}

@customElement("app-root")
class AppRoot extends LitElement {
  static styles = css`
    * { box-sizing: border-box; }
    :host { position: relative; display: flex; flex-direction: column; height: 100vh; overflow: hidden; background: #a0a0a0; font-family: "Open Sans", "Noto Sans CJK SC", sans-serif; }
    .work { display: flex; flex: 1; min-height: 0; }
    pcb-panel { width: 464px; flex: none; }
    .split { width: 2px; flex: none; background: #d4d4d4; }
    doc-area { flex: 1; }
    .crumb { position: absolute; left: 2px; top: 0; width: 15px; height: 2px; background: #8a8a8a; }
    .ring { position: absolute; left: 6px; top: 475px; width: 105px; height: 54px; border: 2px solid #e52b1e; border-radius: 3px; }
    app-bars { flex: none; height: 88px; }
  `;
  render() {
    return html`
      <app-bars></app-bars>
      <div class="work"><pcb-panel></pcb-panel><div class="split"></div><doc-area></doc-area></div>
      <div class="crumb"></div>
      <div class="ring"></div>`;
  }
}
